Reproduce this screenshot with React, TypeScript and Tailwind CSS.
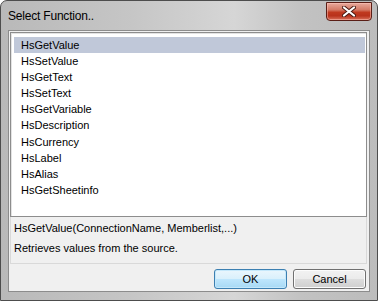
import React from "react";

const FUNCS = [
  "HsGetValue",
  "HsSetValue",
  "HsGetText",
  "HsSetText",
  "HsGetVariable",
  "HsDescription",
  "HsCurrency",
  "HsLabel",
  "HsAlias",
  "HsGetSheetinfo",
];

function CloseButton() {
  return (
    <div className="absolute left-[325px] top-[1px] flex h-[19px] w-[46px] items-center justify-center rounded-b-[4px] border border-[#5a1e16] bg-[linear-gradient(to_bottom,#e8a99c_0%,#d47a66_40%,#c0391f_55%,#b8321c_75%,#d9705a_100%)] shadow-[inset_0_0_0_1px_rgba(255,200,190,0.5)]">
      <svg width="14" height="11" viewBox="0 0 14 11">
        <path d="M2 1.5 L12 9.5 M12 1.5 L2 9.5" stroke="#4a1a12" strokeWidth="4" strokeLinecap="round" />
        <path d="M2 1.5 L12 9.5 M12 1.5 L2 9.5" stroke="#ffffff" strokeWidth="2.2" strokeLinecap="round" />
      </svg>
    </div>
  );
}

export default function App() {
  return (
    <div className="h-[301px] w-[378px] bg-white font-['Liberation_Sans',Arial,sans-serif] text-black">
      <div className="relative flex h-[301px] w-[378px] flex-col overflow-hidden rounded-t-[7px] border border-[#4d4d4d] bg-[linear-gradient(to_right,#b9b9b9_0%,#c6c6c6_35%,#d6d6d6_62%,#c2c2c2_80%,#bcbcbc_100%)]">
        {/* title bar */}
        <div className="flex h-[29px] shrink-0 items-center pl-[7px]">
          <span className="text-[12px] leading-none tracking-[-0.2px]">Select Function..</span>
        </div>
        <CloseButton />

        <div className="flex flex-1 px-[7px]">
          {/* client area */}
          <div className="flex flex-1 flex-col border border-[#8c8c8c] bg-[#f0f0f0] pl-[1px] pr-[2px] pt-[1px]">
            <div className="h-[185px] border border-[#8d8d8d] bg-white px-[1px] pt-[4px] shadow-[inset_1px_1px_0_#e3e3e3]">
              {FUNCS.map((f, i) => (
                <div
                  key={f}
                  className={`h-[16.1px] pl-[7px] text-[11px] leading-[16px] ${
                    i === 0 ? "ml-[2px] bg-[#c0c8d9]" : "ml-[2px]"
                  }`}
                >
                  {f}
                </div>
              ))}
            </div>
            <div className="border-b border-l border-r border-[#d9d9d9] pb-[5px] pl-[3px] pt-[1px] text-[11px] leading-[20px]">
              <div>HsGetValue(ConnectionName, Memberlist,...)</div>
              <div>Retrieves values from the source.</div>
            </div>
            <div className="flex justify-end gap-[6px] pr-[1px] pt-[5px]">
              <button className="flex h-[20px] w-[73px] items-center justify-center rounded-[3px] border border-[#3c7fb1] bg-[linear-gradient(to_bottom,#eaf6fd_0%,#d9f0fc_50%,#bee6fd_51%,#a7d9f5_100%)] text-[11px] shadow-[inset_0_0_0_1px_#c5e8fb]">
                OK
              </button>
              <button className="flex h-[20px] w-[73px] items-center justify-center rounded-[3px] border border-[#707070] bg-[linear-gradient(to_bottom,#f2f2f2_0%,#ebebeb_50%,#dddddd_51%,#cfcfcf_100%)] text-[11px] shadow-[inset_0_0_0_1px_#fcfcfc]">
                Cancel
              </button>
            </div>
          </div>
        </div>
        <div className="h-[8px] shrink-0" />
      </div>
    </div>
  );
}
